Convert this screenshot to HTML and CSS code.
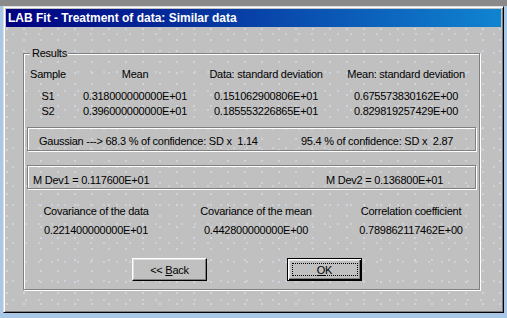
FILE: index.html
```html
<!DOCTYPE html>
<html>
<head>
<meta charset="utf-8">
<title>LAB Fit - Treatment of data: Similar data</title>
<link rel="stylesheet" href="styles.css">
</head>
<body>
<div class="window">
  <div class="titlebar"><span class="title">LAB Fit - Treatment of data: Similar data</span></div>
  <div class="client">
    <div class="group">
      <span class="legend">Results</span>
      <div class="table">
        <div class="row head">
          <span>Sample</span><span>Mean</span><span>Data: standard deviation</span><span>Mean: standard deviation</span>
        </div>
        <div class="row data">
          <span>S1</span><span>0.318000000000E+01</span><span>0.151062900806E+01</span><span>0.675573830162E+00</span>
        </div>
        <div class="row data">
          <span>S2</span><span>0.396000000000E+01</span><span>0.185553226865E+01</span><span>0.829819257429E+00</span>
        </div>
      </div>
      <div class="panel conf">
        <span class="first">Gaussian ---&gt; 68.3 % of confidence: SD x&nbsp; 1.14</span>
        <span>95.4 % of confidence: SD x&nbsp; 2.87</span>
      </div>
      <div class="panel dev">
        <span class="first">M Dev1 = 0.117600E+01</span>
        <span>M Dev2 = 0.136800E+01</span>
      </div>
      <div class="cov">
        <span>Covariance of the data</span><span>Covariance of the mean</span><span>Correlation coefficient</span>
        <span class="val">0.221400000000E+01</span><span class="val">0.442800000000E+00</span><span class="val">0.789862117462E+00</span>
      </div>
      <div class="buttons">
        <div class="btn"><span>&lt;&lt; <u>B</u>ack</span></div>
        <div class="btn default"><span class="focus"><u>O</u>K</span></div>
      </div>
    </div>
  </div>
</div>
</body>
</html>
```

FILE: styles.css
```css
html, body {
  margin: 0;
  padding: 0;
}
body {
  width: 507px;
  height: 318px;
  overflow: hidden;
  background: linear-gradient(#8a8a8a 0, #8a8a8a 6px, #a9c7e6 6px);
  font-family: "Liberation Sans", Arial, sans-serif;
  font-size: 11px;
  letter-spacing: -0.25px;
  color: #000;
}
.window {
  box-sizing: border-box;
  margin: 6px 0 0 3px;
  width: 501px;
  height: 307px;
  border: 1px solid;
  border-color: #dfdfdf #000 #000 #dfdfdf;
  box-shadow: inset 1px 1px 0 #fff, inset -1px -1px 0 #808080;
  padding: 2px;
  background-color: #c0c0c0;
  display: flex;
  flex-direction: column;
}
.titlebar {
  height: 18px;
  flex: none;
  background: linear-gradient(to right, #000080, #1084d0);
  display: flex;
  align-items: center;
  padding-left: 2px;
}
.title {
  color: #fff;
  font-weight: bold;
  font-size: 12px;
  letter-spacing: 0;
}
.client {
  flex: 1;
  margin-top: 1px;
  background-color: #c0c0c0;
  background-image:
    radial-gradient(circle at 1px 1px, #cdd4dc 0.7px, transparent 1px),
    radial-gradient(circle at 1px 1px, #cad1da 0.7px, transparent 1px);
  background-size: 17px 11px, 13px 19px;
  background-position: 0 0, 6px 5px;
}
.group {
  position: relative;
  box-sizing: border-box;
  margin: 25px 0 0 17px;
  width: 457px;
  height: 237px;
  border: 1px solid #808080;
  box-shadow: inset 1px 1px 0 #fff, 1px 1px 0 #fff;
}
.legend {
  position: absolute;
  left: 6px;
  top: -7px;
  padding: 0 1px 0 2px;
  line-height: 13px;
  background: #c0c0c0;
}
.table {
  margin-top: 14px;
}
.row {
  display: grid;
  grid-template-columns: 48px 126px 136px 144px;
  text-align: center;
  white-space: nowrap;
}
.row.head {
  line-height: 13px;
  margin-bottom: 8px;
}
.row.data {
  line-height: 15px;
}
.panel {
  box-sizing: border-box;
  margin-left: 3px;
  width: 449px;
  height: 24px;
  border: 1px solid #808080;
  box-shadow: inset 1px 1px 0 #fff, 1px 1px 0 #fff;
  display: flex;
  line-height: 13px;
  white-space: nowrap;
}
.panel.conf {
  margin-top: 8px;
  padding: 7px 0 0 11px;
}
.panel.conf .first {
  width: 262px;
}
.panel.dev {
  margin-top: 14px;
  padding: 8px 0 0 5px;
}
.panel.dev .first {
  width: 293px;
}
.cov {
  margin-top: 16px;
  display: grid;
  grid-template-columns: 144px 176px 134px;
  grid-template-rows: 13px 13px;
  row-gap: 6px;
  line-height: 13px;
  text-align: center;
  white-space: nowrap;
}
.buttons {
  margin: 21px 0 0 108px;
  display: flex;
  gap: 80px;
}
.btn {
  box-sizing: border-box;
  width: 75px;
  height: 23px;
  border: 1px solid;
  border-color: #fff #000 #000 #fff;
  box-shadow: inset -1px -1px 0 #808080, inset 1px 1px 0 #dfdfdf;
  display: flex;
  align-items: center;
  justify-content: center;
  line-height: 13px;
  padding-top: 1px;
  background: #c0c0c0;
  white-space: pre;
}
.btn u {
  text-decoration: underline;
  text-underline-offset: 1px;
}
.btn.default {
  border: 1px solid #000;
  box-shadow: inset 1px 1px 0 #fff, inset -1px -1px 0 #000, inset -2px -2px 0 #808080, inset 2px 2px 0 #dfdfdf;
  position: relative;
}
.focus::after {
  content: "";
  position: absolute;
  left: 4px;
  top: 4px;
  right: 3px;
  bottom: 4px;
  border: 1px dotted #000;
}
```
